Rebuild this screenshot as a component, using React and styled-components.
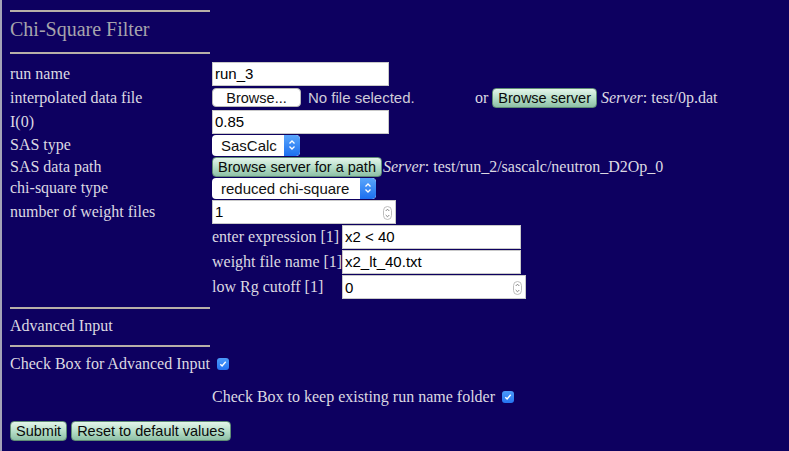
import styled, { createGlobalStyle } from "styled-components";

const GlobalStyle = createGlobalStyle`
  html, body {
    margin: 0;
    padding: 0;
    background: #0d0060;
  }
  body {
    font-family: "Liberation Serif", "Times New Roman", serif;
    font-size: 16px;
    color: #dcd9e2;
  }
`;

const Page = styled.div`
  min-height: 100vh;
  box-sizing: border-box;
  border-left: 2px solid #a4a2b8;
  padding: 10px 8px 8px 8px;
`;

const Rule = styled.div`
  width: 200px;
  height: 2px;
  background: #b7afa8;
  margin: ${(p) => p.$m || "0"};
`;

const Heading = styled.div`
  font-size: 20px;
  line-height: 34px;
  color: #a6a4ac;
  margin-bottom: 6px;
`;

const Form = styled.div`
  display: flex;
  flex-direction: column;
  margin-top: 7px;
`;

const Row = styled.div`
  display: flex;
  align-items: center;
  min-height: ${(p) => p.$h || 22}px;
`;

const Label = styled.div`
  width: ${(p) => p.$w || 202}px;
  flex: none;
  line-height: 18px;
  white-space: nowrap;
`;

const Cell = styled.div`
  display: flex;
  align-items: center;
`;

const Nested = styled.div`
  display: flex;
  flex-direction: column;
  margin-left: 202px;
`;

const TextBox = styled.div`
  box-sizing: border-box;
  width: ${(p) => p.$w || 177}px;
  height: 24px;
  background: #fff;
  border: 1px solid #c9c9c9;
  font-family: "Liberation Sans", Arial, sans-serif;
  font-size: 15px;
  color: #000;
  display: flex;
  align-items: center;
  padding: 0 2px;
  position: relative;
`;

const Spinner = styled.svg`
  position: absolute;
  right: 3px;
  top: 5px;
`;

const PlainButton = styled.div`
  box-sizing: border-box;
  width: 89px;
  height: 19px;
  background: #fff;
  border: 1px solid #b9b9b9;
  border-radius: 4px;
  font-family: "Liberation Sans", Arial, sans-serif;
  font-size: 14.5px;
  color: #111;
  display: flex;
  align-items: center;
  justify-content: center;
`;

const GreenButton = styled.div`
  box-sizing: border-box;
  height: ${(p) => p.$h || 19}px;
  padding: 0 5px;
  background: linear-gradient(#e4f5ea, #b3dcc6 55%, #8ec0a6);
  border: 1px solid #5f8c75;
  border-radius: 4px;
  font-family: "Liberation Sans", Arial, sans-serif;
  font-size: 14.5px;
  color: #0a0a0a;
  display: inline-flex;
  align-items: center;
  white-space: nowrap;
`;

const FileNote = styled.span`
  font-family: "Liberation Sans", Arial, sans-serif;
  font-size: 15px;
  color: #cfcbd8;
  margin-left: 7px;
  width: 167px;
`;

const Or = styled.span`
  margin-right: 4px;
`;

const ServerText = styled.span`
  margin-left: ${(p) => p.$ml ?? 4}px;
  white-space: nowrap;
  em {
    font-style: italic;
  }
`;

const SelectBox = styled.div`
  box-sizing: border-box;
  width: ${(p) => p.$w}px;
  height: 21px;
  background: #fff;
  border-radius: 4px;
  display: flex;
  align-items: stretch;
  overflow: hidden;
  font-family: "Liberation Sans", Arial, sans-serif;
  font-size: 15px;
  color: #111;
`;

const SelectText = styled.div`
  flex: 1;
  padding-left: 9px;
  display: flex;
  align-items: center;
`;

const SelectArrow = styled.div`
  width: 16px;
  background: linear-gradient(#5aa6fb, #1c6ff0);
  border-radius: 0 4px 4px 0;
  display: flex;
  align-items: center;
  justify-content: center;
`;

const SubTitle = styled.div`
  line-height: 20px;
  padding: 7px 0 9px;
`;

const CheckRow = styled.div`
  display: flex;
  align-items: center;
  margin-left: ${(p) => p.$ml || 0}px;
  margin-top: ${(p) => p.$mt || 0}px;
  line-height: 18px;
`;

const Check = styled.span`
  display: inline-flex;
  align-items: center;
  justify-content: center;
  width: 12px;
  height: 12px;
  border-radius: 3px;
  background: linear-gradient(#4c9bfa, #2574f1);
  margin-left: 7px;
`;

const Actions = styled.div`
  display: flex;
  gap: 4px;
  margin-top: 15px;
`;

function Select({ width, value }) {
  return (
    <SelectBox $w={width}>
      <SelectText>{value}</SelectText>
      <SelectArrow>
        <svg width="8" height="12" viewBox="0 0 8 12">
          <path d="M1.5 4.5 L4 2 L6.5 4.5 M1.5 7.5 L4 10 L6.5 7.5" fill="none" stroke="#fff" strokeWidth="1.3" />
        </svg>
      </SelectArrow>
    </SelectBox>
  );
}

function NumberBox({ width, value }) {
  return (
    <TextBox $w={width}>
      {value}
      <Spinner width="9" height="14" viewBox="0 0 9 14">
        <rect x="0.5" y="0.5" width="8" height="13" rx="4" fill="#fff" stroke="#bdbdbd" />
        <path d="M2.7 5 L4.5 3.2 L6.3 5 M2.7 9 L4.5 10.8 L6.3 9" fill="none" stroke="#777" strokeWidth="0.9" />
      </Spinner>
    </TextBox>
  );
}

function Checkbox() {
  return (
    <Check>
      <svg width="8" height="8" viewBox="0 0 8 8">
        <path d="M1.3 4.2 L3.1 6 L6.7 1.8" fill="none" stroke="#fff" strokeWidth="1.4" />
      </svg>
    </Check>
  );
}

export default function App() {
  return (
    <>
      <GlobalStyle />
      <Page>
        <Rule />
        <Heading>Chi-Square Filter</Heading>
        <Rule />
        <Form>
          <Row $h={25}>
            <Label>run name</Label>
            <TextBox>run_3</TextBox>
          </Row>
          <Row $h={23}>
            <Label>interpolated data file</Label>
            <Cell>
              <PlainButton>Browse...</PlainButton>
              <FileNote>No file selected.</FileNote>
              <Or>or</Or>
              <GreenButton $h={20}>Browse server</GreenButton>
              <ServerText>
                <em>Server</em>: test/0p.dat
              </ServerText>
            </Cell>
          </Row>
          <Row $h={25}>
            <Label>I(0)</Label>
            <TextBox>0.85</TextBox>
          </Row>
          <Row $h={22}>
            <Label>SAS type</Label>
            <Select width={88} value="SasCalc" />
          </Row>
          <Row $h={21}>
            <Label>SAS data path</Label>
            <Cell>
              <GreenButton $h={20}>Browse server for a path</GreenButton>
              <ServerText $ml={1}>
                <em>Server</em>: test/run_2/sascalc/neutron_D2Op_0
              </ServerText>
            </Cell>
          </Row>
          <Row $h={22}>
            <Label>chi-square type</Label>
            <Select width={164} value="reduced chi-square" />
          </Row>
          <Row $h={25}>
            <Label>number of weight files</Label>
            <NumberBox width={184} value="1" />
          </Row>
          <Nested>
            <Row $h={25}>
              <Label $w={130}>enter expression [1]</Label>
              <TextBox $w={179}>x2 &lt; 40</TextBox>
            </Row>
            <Row $h={25}>
              <Label $w={130}>weight file name [1]</Label>
              <TextBox $w={179}>x2_lt_40.txt</TextBox>
            </Row>
            <Row $h={26}>
              <Label $w={130}>low Rg cutoff [1]</Label>
              <NumberBox width={184} value="0" />
            </Row>
          </Nested>
        </Form>
        <Rule $m="7px 0 0" />
        <SubTitle>Advanced Input</SubTitle>
        <Rule />
        <CheckRow $mt={8}>
          Check Box for Advanced Input
          <Checkbox />
        </CheckRow>
        <CheckRow $ml={202} $mt={15}>
          Check Box to keep existing run name folder
          <Checkbox />
        </CheckRow>
        <Actions>
          <GreenButton $h={20}>Submit</GreenButton>
          <GreenButton $h={20}>Reset to default values</GreenButton>
        </Actions>
      </Page>
    </>
  );
}
